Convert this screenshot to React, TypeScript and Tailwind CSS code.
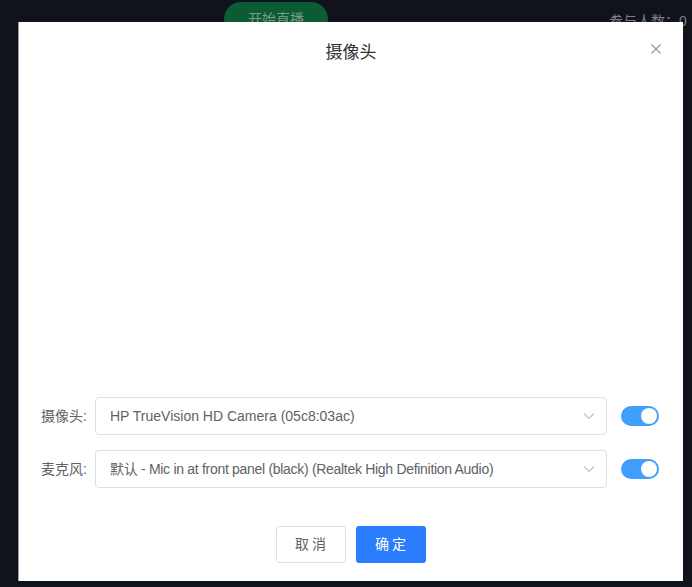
import React from "react";

const font = { fontFamily: '"Liberation Sans", "Noto Sans CJK SC", sans-serif' };

function Chevron() {
  return (
    <svg width="12" height="8" viewBox="0 0 12 8" fill="none">
      <path d="M1 1.5 L6 6.5 L11 1.5" stroke="#c0c4cc" strokeWidth="1.2" />
    </svg>
  );
}

function Toggle() {
  return (
    <div className="relative w-[38px] h-[20px] rounded-full bg-[#409eff] shrink-0">
      <div className="absolute right-[2px] top-[2px] w-[16px] h-[16px] rounded-full bg-white" />
    </div>
  );
}

function Row({ label, value, tight }: { label: string; value: string; tight?: boolean }) {
  return (
    <div className="flex items-center h-[38px]">
      <div className="w-[76px] pr-[8px] text-right text-[14px] text-[#606266] shrink-0">{label}</div>
      <div className="w-[512px] h-[38px] border border-[#dcdfe6] rounded-[4px] flex items-center justify-between pl-[14px] pr-[11px] shrink-0">
        <span className={tight ? "text-[14px] text-[#606266] whitespace-nowrap tracking-[-0.3px]" : "text-[14px] text-[#606266] whitespace-nowrap"}>{value}</span>
        <Chevron />
      </div>
      <div className="ml-[14px]">
        <Toggle />
      </div>
    </div>
  );
}

export default function App() {
  return (
    <div className="relative w-[692px] h-[587px] bg-[#10131b] overflow-hidden" style={font}>
      <div className="flex items-start h-[40px] pt-[2px]">
        <div className="ml-[224px] w-[104px] h-[34px] rounded-full bg-[#0b5b33] flex items-center justify-center text-[14px] text-[#7d9a89]">
          开始直播
        </div>
        <div className="ml-auto mt-[9px] text-[14px] text-[#7c8088] whitespace-nowrap w-[83px] overflow-hidden">参与人数：0</div>
      </div>
      <div className="absolute left-[18px] top-[22px] w-[665px] h-[559px] bg-white border-l border-[#9ca0a8] flex flex-col">
        <div className="relative h-[58px] flex items-start justify-center pt-[19px]">
          <span className="text-[17px] text-[#303133] leading-[24px]">摄像头</span>
          <svg className="absolute right-[22px] top-[22px]" width="10" height="10" viewBox="0 0 10 10">
            <path d="M0.5 0.5 L9.5 9.5 M9.5 0.5 L0.5 9.5" stroke="#909399" strokeWidth="1.1" />
          </svg>
        </div>
        <div className="h-[317px]" />
        <div className="flex flex-col gap-[15px]">
          <Row label="摄像头:" value="HP TrueVision HD Camera (05c8:03ac)" />
          <Row label="麦克风:" value="默认 - Mic in at front panel (black) (Realtek High Definition Audio)" tight />
        </div>
        <div className="flex justify-center gap-[10px] mt-[38px] pr-[1px]">
          <div className="w-[70px] h-[37px] border border-[#dcdfe6] rounded-[3px] flex items-center justify-center text-[14px] text-[#606266] tracking-[3px] pl-[3px]">
            取消
          </div>
          <div className="w-[70px] h-[37px] bg-[#2a7dfd] rounded-[3px] flex items-center justify-center text-[14px] text-white tracking-[3px] pl-[3px]">
            确定
          </div>
        </div>
      </div>
    </div>
  );
}
